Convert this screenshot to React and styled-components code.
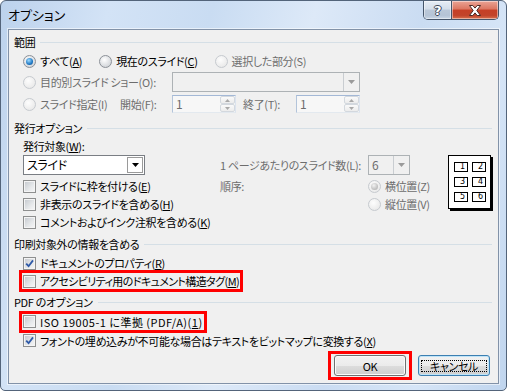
import React from "react";
import styled, { createGlobalStyle } from "styled-components";

const FONT = `"Noto Sans CJK JP", "Noto Sans", sans-serif`;

const Global = createGlobalStyle`
  html, body { margin: 0; padding: 0; background: #ffffff; }
  body { font-family: ${FONT}; font-size: 11px; }
`;

const Window = styled.div`
  box-sizing: border-box;
  width: 507px;
  height: 391px;
  display: flex;
  flex-direction: column;
  padding: 0 7px 6px 7px;
  border: 1px solid #53647a;
  border-radius: 6px 6px 5px 5px;
  background: linear-gradient(
    105deg,
    #bcd2ec 0%,
    #d3e3f6 18%,
    #c9dcf2 35%,
    #dde9f8 52%,
    #cadcf2 70%,
    #d6e5f7 85%,
    #c0d5ee 100%
  );
  font-family: ${FONT};
  font-size: 11px;
  letter-spacing: -0.35px;
  line-height: 14px;
  color: #000;
  font-feature-settings: "palt";
  overflow: hidden;
`;

const TitleBar = styled.div`
  height: 28px;
  flex: none;
  display: flex;
  align-items: flex-start;
`;

const Title = styled.div`
  margin-top: 6px;
  font-size: 13px;
  letter-spacing: 0;
  line-height: 15px;
  color: #000;
`;

const Caption = styled.div`
  margin-left: auto;
  display: flex;
  height: 19px;
  box-sizing: border-box;
  border: 1px solid #45556a;
  border-top: none;
  border-radius: 0 0 5px 5px;
  overflow: hidden;
`;

const CapButton = styled.div`
  width: ${(p) => p.$w}px;
  height: 100%;
  display: flex;
  align-items: center;
  justify-content: center;
  background: ${(p) =>
    p.$close
      ? "linear-gradient(#eaa495 0%, #dc7661 45%, #c63f26 50%, #c2432a 80%, #d8714f 100%)"
      : "linear-gradient(#e6edf6 0%, #d4deea 45%, #bac8d9 50%, #b5c4d6 80%, #c9d7e6 100%)"};
  border-left: ${(p) => (p.$close ? "1px solid #45556a" : "none")};
  box-shadow: inset 0 0 0 1px rgba(255, 255, 255, 0.45);
`;

const HelpGlyph = styled.span`
  font-family: "DejaVu Sans", sans-serif;
  font-weight: bold;
  font-size: 13px;
  line-height: 13px;
  color: #fff;
  text-shadow: 1px 0 0 #3b4758, -1px 0 0 #3b4758, 0 1px 0 #3b4758, 0 -1px 0 #3b4758;
`;

const Client = styled.div`
  flex: 1;
  display: flex;
  flex-direction: column;
  background: #f0f0f0;
  border: 1px solid #8292a8;
  box-shadow: 0 0 0 1px rgba(255, 255, 255, 0.55);
  padding: 0 6px 0 5px;
`;

const Header = styled.div`
  display: flex;
  align-items: center;
  gap: 5px;
  height: 16px;
  margin-top: ${(p) => p.$mt || 0}px;
  white-space: nowrap;
  &::after {
    content: "";
    flex: 1;
    height: 1px;
    background: #d5dfe6;
  }
`;

const Body = styled.div`
  display: flex;
  flex-direction: ${(p) => (p.$row ? "row" : "column")};
  padding-left: 9px;
`;

const Row = styled.div`
  display: flex;
  align-items: ${(p) => (p.$top ? "flex-start" : "center")};
  height: ${(p) => p.$h}px;
  margin-top: ${(p) => p.$mt || 0}px;
  gap: ${(p) => p.$gap || 0}px;
  white-space: nowrap;
`;

const Choice = styled.span`
  position: relative;
  display: inline-flex;
  align-items: center;
  gap: 4px;
  width: ${(p) => (p.$w ? `${p.$w}px` : "auto")};
  flex: none;
  color: ${(p) => (p.$disabled ? "#6d6d6d" : "#000")};
  &::after {
    content: "";
    display: ${(p) => (p.$mark ? "block" : "none")};
    position: absolute;
    top: -${(p) => p.$mark?.[0] || 0}px;
    bottom: -${(p) => p.$mark?.[0] || 0}px;
    left: -${(p) => p.$mark?.[1] || 0}px;
    right: -${(p) => p.$mark?.[1] || 0}px;
    border: 3px solid #ff0000;
    pointer-events: none;
  }
`;

const ChoiceText = styled.span`
  letter-spacing: ${(p) => (p.$ls != null ? `${p.$ls}px` : "inherit")};
`;

const RadioDot = styled.span`
  flex: none;
  position: relative;
  box-sizing: border-box;
  width: 13px;
  height: 13px;
  border-radius: 50%;
  border: 1px solid ${(p) => (p.$disabled ? "#c6cacf" : "#8c9198")};
  background: ${(p) =>
    p.$disabled
      ? "radial-gradient(circle at 40% 35%, #fdfdfd, #eaeaea 75%)"
      : "radial-gradient(circle at 40% 35%, #ffffff, #d3d6da 75%)"};
  &::after {
    content: "";
    position: absolute;
    left: 2px;
    top: 2px;
    width: 7px;
    height: 7px;
    border-radius: 50%;
    display: ${(p) => (p.$checked ? "block" : "none")};
    background: ${(p) =>
      p.$disabled
        ? "radial-gradient(circle at 40% 35%, #f2f2f2, #b4b4b4 80%)"
        : "radial-gradient(circle at 40% 35%, #9fdcff, #1f78c4 60%, #0e4a88 100%)"};
  }
`;

const CheckBox = styled.span`
  flex: none;
  box-sizing: border-box;
  width: 13px;
  height: 13px;
  border: 1px solid #8e8f8f;
  background: linear-gradient(135deg, #c3c7cd 0%, #e6e8ea 60%, #f7f7f7 100%);
  box-shadow: inset 0 0 0 1px #f4f4f4;
  display: flex;
  align-items: center;
  justify-content: center;
`;

const Label = styled.span`
  flex: none;
  width: ${(p) => (p.$w ? `${p.$w}px` : "auto")};
  padding-left: ${(p) => p.$pl || 0}px;
  box-sizing: border-box;
  line-height: ${(p) => p.$lh || 14}px;
  color: ${(p) => (p.$disabled ? "#6d6d6d" : "#000")};
  white-space: nowrap;
`;

const Combo = styled.div`
  box-sizing: border-box;
  width: ${(p) => p.$w}px;
  height: 20px;
  flex: none;
  display: flex;
  align-items: stretch;
  border: 1px solid ${(p) => (p.$disabled ? "#adb2b5" : "#7a7e84")};
  background: ${(p) => (p.$disabled ? "#f0f0f0" : "#ffffff")};
  color: ${(p) => (p.$disabled ? "#6d6d6d" : "#000")};
`;

const ComboText = styled.span`
  flex: 1;
  padding-left: 3px;
  display: flex;
  align-items: center;
  font-size: 12px;
`;

const ComboButton = styled.span`
  width: 16px;
  box-sizing: border-box;
  display: flex;
  align-items: center;
  justify-content: center;
  margin: ${(p) => (p.$disabled ? "0" : "1px")};
  border: ${(p) => (p.$disabled ? "none" : "1px solid #9a9a9a")};
  border-left: 1px solid ${(p) => (p.$disabled ? "#c9cdd1" : "#9a9a9a")};
  background: ${(p) => (p.$disabled ? "#f0f0f0" : "#ffffff")};
`;

const Spin = styled.div`
  box-sizing: border-box;
  width: 64px;
  height: 18px;
  flex: none;
  display: flex;
  border: 1px solid;
  border-color: #a3b8d6 #dbe3ee #e3e9ef #b3c4da;
  background: #f7f7f7;
`;

const SpinValue = styled.span`
  flex: 1;
  padding-left: 3px;
  color: #6d6d6d;
  font-size: 12px;
  line-height: 16px;
`;

const SpinButtons = styled.span`
  width: 15px;
  display: flex;
  flex-direction: column;
`;

const SpinBtn = styled.span`
  flex: 1;
  box-sizing: border-box;
  border: 1px solid #d3d8de;
  border-radius: 2px;
  background: linear-gradient(#fafafa, #ececec);
  display: flex;
  align-items: center;
  justify-content: center;
`;

const LeftCol = styled.div`
  width: 197px;
  flex: none;
  display: flex;
  flex-direction: column;
`;

const RightCol = styled.div`
  flex: none;
  display: flex;
  align-items: flex-start;
  padding-top: 19px;
`;

const Settings = styled.div`
  width: 190px;
  flex: none;
  display: flex;
  flex-direction: column;
`;

const RadioCol = styled.div`
  display: flex;
  flex-direction: column;
`;

const Preview = styled.div`
  flex: none;
  margin-left: 38px;
  box-sizing: border-box;
  width: 43px;
  height: 54px;
  border: 1px solid #000;
  background: #fff;
  box-shadow: 2px 2px 0 #000;
  display: grid;
  grid-template-columns: 14px 14px;
  grid-auto-rows: 10px;
  column-gap: 4px;
  row-gap: 5px;
  padding: 6px 0 0 5px;
  align-content: start;
`;

const Cell = styled.span`
  box-sizing: border-box;
  height: 10px;
  border: 1px solid #000;
  font-family: "DejaVu Sans", sans-serif;
  font-size: 8px;
  line-height: 8px;
  letter-spacing: 0;
  text-align: right;
  padding-right: 2px;
  font-feature-settings: normal;
`;

const ButtonBar = styled.div`
  display: flex;
  justify-content: flex-end;
  gap: 12px;
  margin-top: 5px;
  padding-right: 2px;
`;

const Button = styled.button`
  position: relative;
  box-sizing: border-box;
  width: 72px;
  height: 21px;
  padding: 0;
  border: 1px solid ${(p) => (p.$default ? "#3c7fb1" : "#707070")};
  border-radius: 3px;
  background: linear-gradient(#f2f2f2 0%, #ebebeb 50%, #dddddd 50%, #cfcfcf 100%);
  box-shadow: inset 0 0 0 1px ${(p) => (p.$default ? "#bfe4f8" : "#fbfbfb")};
  font-family: ${FONT};
  font-feature-settings: "palt";
  font-size: 11px;
  letter-spacing: -0.35px;
  color: #000;
  display: flex;
  align-items: center;
  justify-content: center;
  &::before {
    content: "";
    display: ${(p) => (p.$focus ? "block" : "none")};
    position: absolute;
    left: 2px;
    right: 2px;
    top: 4px;
    bottom: 3px;
    border: 1px dotted #000;
  }
  &::after {
    content: "";
    display: ${(p) => (p.$mark ? "block" : "none")};
    position: absolute;
    top: -5px;
    bottom: -5px;
    left: -7px;
    right: -7px;
    border: 3px solid #ff0000;
  }
`;

const Arrow = ({ color = "#000" }) => (
  <svg width="7" height="4" viewBox="0 0 7 4">
    <path d="M0 0 H7 L3.5 4 Z" fill={color} />
  </svg>
);

const SmallArrow = ({ up }) => (
  <svg width="5" height="3" viewBox="0 0 5 3">
    <path d={up ? "M0 3 H5 L2.5 0 Z" : "M0 0 H5 L2.5 3 Z"} fill="#a8a8a8" />
  </svg>
);

const CheckMark = () => (
  <svg width="9" height="9" viewBox="0 0 9 9">
    <path d="M1.2 4.6 L3.6 7.2 L8 1.4" fill="none" stroke="#2f5aa8" strokeWidth="1.8" />
  </svg>
);

const CloseIcon = () => (
  <svg width="14" height="11" viewBox="0 0 14 11">
    <path
      d="M1.5 0.5 H4.8 L7 3.1 L9.2 0.5 H12.5 L8.8 5.5 L12.5 10.5 H9.2 L7 7.9 L4.8 10.5 H1.5 L5.2 5.5 Z"
      fill="#ffffff"
      stroke="#4a2a25"
      strokeWidth="1"
      strokeLinejoin="round"
    />
  </svg>
);

function Radio({ checked, disabled, w, children }) {
  return (
    <Choice $disabled={disabled} $w={w}>
      <RadioDot $checked={checked} $disabled={disabled} />
      <span>{children}</span>
    </Choice>
  );
}

function Check({ checked, mark, ls, children }) {
  return (
    <Choice $mark={mark}>
      <CheckBox>{checked && <CheckMark />}</CheckBox>
      <ChoiceText $ls={ls}>{children}</ChoiceText>
    </Choice>
  );
}

function SpinBox({ value }) {
  return (
    <Spin>
      <SpinValue>{value}</SpinValue>
      <SpinButtons>
        <SpinBtn>
          <SmallArrow up />
        </SpinBtn>
        <SpinBtn>
          <SmallArrow />
        </SpinBtn>
      </SpinButtons>
    </Spin>
  );
}

function Dropdown({ w, disabled, children }) {
  return (
    <Combo $w={w} $disabled={disabled}>
      <ComboText>{children}</ComboText>
      <ComboButton $disabled={disabled}>
        <Arrow color={disabled ? "#9a9a9a" : "#000"} />
      </ComboButton>
    </Combo>
  );
}

export default function App() {
  return (
    <>
      <Global />
      <Window>
        <TitleBar>
          <Title>オプション</Title>
          <Caption>
            <CapButton $w={27}>
              <HelpGlyph>?</HelpGlyph>
            </CapButton>
            <CapButton $w={46} $close>
              <CloseIcon />
            </CapButton>
          </Caption>
        </TitleBar>
        <Client>
          <Header $mt={4}>範囲</Header>
          <Body>
            <Row $h={22} $gap={17}>
              <Radio checked>
                すべて(<u>A</u>)
              </Radio>
              <Radio>
                現在のスライド(<u>C</u>)
              </Radio>
              <Radio disabled>選択した部分(S)</Radio>
            </Row>
            <Row $h={20}>
              <Radio disabled w={149}>
                目的別スライド ショー(O):
              </Radio>
              <Dropdown w={188} disabled />
            </Row>
            <Row $h={24}>
              <Radio disabled w={97}>
                スライド指定(I)
              </Radio>
              <Label $w={52} $disabled>
                開始(F):
              </Label>
              <SpinBox value="1" />
              <Label $w={60} $pl={7} $disabled>
                終了(T):
              </Label>
              <SpinBox value="1" />
            </Row>
          </Body>

          <Header $mt={4}>発行オプション</Header>
          <Body $row>
            <LeftCol>
              <Row $h={19}>
                <Label>
                  発行対象(<u>W</u>):
                </Label>
              </Row>
              <Dropdown w={122}>スライド</Dropdown>
              <Row $h={18} $mt={2}>
                <Check>
                  スライドに枠を付ける(<u>E</u>)
                </Check>
              </Row>
              <Row $h={18}>
                <Check>
                  非表示のスライドを含める(<u>H</u>)
                </Check>
              </Row>
              <Row $h={18}>
                <Check>
                  コメントおよびインク注釈を含める(<u>K</u>)
                </Check>
              </Row>
            </LeftCol>
            <RightCol>
              <Settings>
                <Row $h={20}>
                  <Label $w={148} $disabled>
                    1 ページあたりのスライド数(L):
                  </Label>
                  <Dropdown w={42} disabled>
                    6
                  </Dropdown>
                </Row>
                <Row $h={36} $mt={2} $top>
                  <Label $w={148} $lh={18} $disabled>
                    順序:
                  </Label>
                  <RadioCol>
                    <Row $h={18}>
                      <Radio checked disabled>
                        横位置(Z)
                      </Radio>
                    </Row>
                    <Row $h={18}>
                      <Radio disabled>縦位置(V)</Radio>
                    </Row>
                  </RadioCol>
                </Row>
              </Settings>
              <Preview>
                {[1, 2, 3, 4, 5, 6].map((n) => (
                  <Cell key={n}>{n}</Cell>
                ))}
              </Preview>
            </RightCol>
          </Body>

          <Header $mt={5}>印刷対象外の情報を含める</Header>
          <Body>
            <Row $h={18} $mt={2}>
              <Check checked>
                ドキュメントのプロパティ(<u>R</u>)
              </Check>
            </Row>
            <Row $h={18}>
              <Check mark={[4, 4]} ls={-0.6}>
                アクセシビリティ用のドキュメント構造タグ(<u>M</u>)
              </Check>
            </Row>
          </Body>

          <Header $mt={4}>PDF のオプション</Header>
          <Body>
            <Row $h={19} $mt={2}>
              <Check mark={[4, 4]} ls={0.5}>
                ISO 19005-1 に準拠 (PDF/A)(<u>1</u>)
              </Check>
            </Row>
            <Row $h={19}>
              <Check checked>
                フォントの埋め込みが不可能な場合はテキストをビットマップに変換する(<u>X</u>)
              </Check>
            </Row>
          </Body>

          <ButtonBar>
            <Button $mark>OK</Button>
            <Button $default $focus>
              キャンセル
            </Button>
          </ButtonBar>
        </Client>
      </Window>
    </>
  );
}
